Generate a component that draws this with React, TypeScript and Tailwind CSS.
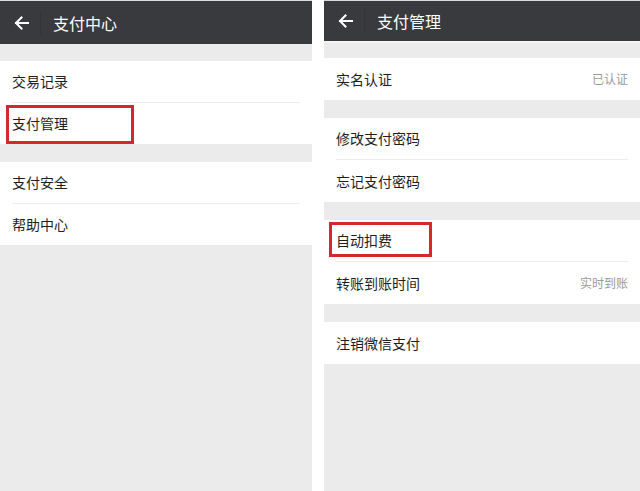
import React from "react";

const font = { fontFamily: '"Noto Sans CJK SC", "Noto Sans", sans-serif' };

function Arrow() {
  return (
    <svg width="15" height="14" viewBox="0 0 15 14" fill="none">
      <path d="M14 7H2M7.5 1.5L2 7l5.5 5.5" stroke="#ffffff" strokeWidth="2" strokeLinecap="square" />
    </svg>
  );
}

function Header({ title, h }: { title: string; h: string }) {
  return (
    <div className={`flex items-center bg-[#393a3e] ${h}`}>
      <div className="pl-[14px] w-[40px] flex items-center">
        <Arrow />
      </div>
      <div className="w-px h-[24px] bg-[#33343a]" />
      <div className="pl-[12px] text-white text-[16px]">{title}</div>
    </div>
  );
}

function Row({
  label,
  value,
  h,
  divider,
  boxed,
}: {
  label: string;
  value?: string;
  h: string;
  divider?: boolean;
  boxed?: string;
}) {
  return (
    <div className={`relative bg-white ${h}`}>
      <div className={`h-full mx-[12px] flex items-center justify-between ${divider ? "border-b border-[#ececec]" : ""}`}>
        <span className="text-[14px] text-[#1e1e1e]">{label}</span>
        {value && <span className="text-[12px] text-[#9a9a9a]">{value}</span>}
      </div>
      {boxed && <div className={`absolute border-[3px] border-[#d22a2c] ${boxed}`} />}
    </div>
  );
}

export default function App() {
  return (
    <div className="w-[640px] h-[491px] bg-white flex overflow-hidden" style={font}>
      <div className="w-[312px] h-full flex flex-col bg-[#ebebeb]">
        <div className="h-px bg-[#d9dcd9]" />
        <Header title="支付中心" h="h-[43px]" />
        <div className="h-[17px]" />
        <Row label="交易记录" h="h-[42px]" divider />
        <Row label="支付管理" h="h-[41px]" boxed="left-[6px] top-[2px] w-[128px] h-[39px]" />
        <div className="h-[18px]" />
        <Row label="支付安全" h="h-[42px]" divider />
        <Row label="帮助中心" h="h-[41px]" />
      </div>
      <div className="w-[12px]" />
      <div className="flex-1 h-full flex flex-col bg-[#ebebeb]">
        <div className="h-px bg-[#d9d9d9]" />
        <Header title="支付管理" h="h-[40px]" />
        <div className="h-[2px] bg-[#f3f3f3]" />
        <div className="h-[15px]" />
        <Row label="实名认证" value="已认证" h="h-[42px]" />
        <div className="h-[18px]" />
        <Row label="修改支付密码" h="h-[42px]" divider />
        <Row label="忘记支付密码" h="h-[42px]" />
        <div className="h-[18px]" />
        <Row label="自动扣费" h="h-[42px]" divider boxed="left-[5px] top-[2px] w-[103px] h-[35px]" />
        <Row label="转账到账时间" value="实时到账" h="h-[42px]" />
        <div className="h-[18px]" />
        <Row label="注销微信支付" h="h-[42px]" />
      </div>
    </div>
  );
}
